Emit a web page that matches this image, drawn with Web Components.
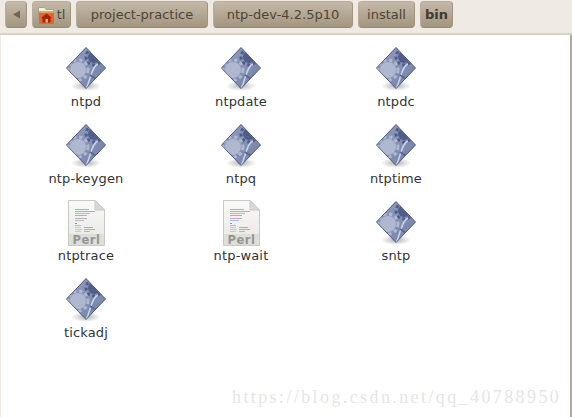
<!DOCTYPE html>
<html>
<head>
<meta charset="utf-8">
<style>
  html, body { margin: 0; padding: 0; width: 572px; height: 417px; overflow: hidden; background: #fff; }
</style>
</head>
<body>
<file-browser>
  <path-bar slot="bar">
    <crumb-button kind="back"></crumb-button>
    <crumb-button kind="home" width="39">tl</crumb-button>
    <crumb-button width="132">project-practice</crumb-button>
    <crumb-button width="140">ntp-dev-4.2.5p10</crumb-button>
    <crumb-button width="57">install</crumb-button>
    <crumb-button width="33" current>bin</crumb-button>
  </path-bar>
  <file-icon>ntpd</file-icon>
  <file-icon>ntpdate</file-icon>
  <file-icon>ntpdc</file-icon>
  <file-icon>ntp-keygen</file-icon>
  <file-icon>ntpq</file-icon>
  <file-icon>ntptime</file-icon>
  <file-icon type="perl">ntptrace</file-icon>
  <file-icon type="perl">ntp-wait</file-icon>
  <file-icon>sntp</file-icon>
  <file-icon>tickadj</file-icon>
  <water-mark slot="mark">https://blog.csdn.net/qq_40788950</water-mark>
</file-browser>

<script>
// Shared look of the window
const colors = {
  chrome: "#efebe4",
  chromeLine: "#d9d2c4",
  buttonTop: "#c4b9a8",
  buttonBottom: "#a3967f",
  buttonLine: "#94886f",
  text: "#4c4536",
};

class FileBrowser extends HTMLElement {
  constructor() {
    super();
    this.attachShadow({ mode: "open" });
    this.shadowRoot.innerHTML = /*html*/ `
    <style>
      :host { display: flex; flex-direction: column; position: relative; width: 572px; height: 417px; background: #fff; overflow: hidden;
        font-family: "DejaVu Sans", sans-serif; }
      .top { background: ${colors.chrome}; height: 33px; border-bottom: 2px solid ${colors.chromeLine}; flex: none; }
      .view { flex: 1; display: grid; grid-template-columns: repeat(3, 155px); grid-auto-rows: 77px; padding: 11px 0 0 7.5px;
        align-content: start; border-right: 2px solid #b3a995; border-left: 1px solid ${colors.chrome}; }
    </style>
    <div class="top"><slot name="bar"></slot></div>
    <div class="view"><slot></slot></div>
    <slot name="mark"></slot>`;
  }
}

class PathBar extends HTMLElement {
  constructor() {
    super();
    this.attachShadow({ mode: "open" });
    this.shadowRoot.innerHTML = `
    <style>
      :host { display: flex; gap: 5px; padding: 1px 0 0 5px; height: 27px; }
    </style>
    <slot></slot>`;
  }
}

class CrumbButton extends HTMLElement {
  constructor() {
    super();
    const kind = this.getAttribute("kind");
    const w = this.getAttribute("width") || 22;
    let lead = "";
    if (kind === "back") {
      lead = `<svg width="9" height="9" viewBox="0 0 9 9"><path d="M8 0.5V8.5L1 4.5Z" fill="#6d6655"/></svg>`;
    }
    if (kind === "home") {
      // folder with the red house on it
      lead = `<svg width="16" height="18" viewBox="0 0 16 18" style="margin-right:3px">
        <path d="M.5 1.500h6l1.500 2h7.500v12H.5Z" fill="#f3efe6" stroke="#a89f8e"/>
        <rect x="1" y="5" width="15" height="13" fill="#e2662b"/>
        <rect x="1" y="5" width="15" height="2" fill="#ef9a62"/>
        <path d="M3 12L8.500 7.500 14 12H12.500v4.500H4.500V12Z" fill="#a8200f"/>
        <rect x="7.500" y="13" width="2.500" height="3.500" fill="#f2b26d"/>
      </svg>`;
    }
    this.attachShadow({ mode: "open" });
    this.shadowRoot.innerHTML = `
    <style>
      :host { display: flex; align-items: center; justify-content: center; box-sizing: border-box; width: ${w}px; height: 27px;
        border: 1px solid ${colors.buttonLine}; border-color: #b7ad9a #a0947e ${colors.buttonLine} #b7ad9a; border-radius: 4px;
        background: linear-gradient(${colors.buttonTop}, ${colors.buttonBottom});
        color: ${colors.text}; font-size: 13px; white-space: nowrap; }
      :host([current]) { font-weight: bold; color: #3f3a2e; }
    </style>
    ${lead}<slot></slot>`;
  }
}

class FileIcon extends HTMLElement {
  constructor() {
    super();
    this.attachShadow({ mode: "open" });
    this.shadowRoot.innerHTML = `
    <style>
      :host { display: flex; flex-direction: column; align-items: center; color: #333; font-size: 13px; }
      .pic { height: 46px; display: flex; align-items: flex-end; justify-content: center; }
      .name { margin-top: 2px; line-height: 16px; white-space: nowrap; letter-spacing: 0.15px; }
      svg { display: block; }
    </style>
    <div class="pic">${this.getAttribute("type") === "perl" ? FileIcon.perl() : FileIcon.binary()}</div>
    <div class="name"><slot></slot></div>`;
  }

  // diamond with the two gears; ids stay inside this shadow root
  static binary() {
    return `<svg width="42" height="46" viewBox="0 0 42 46">
      <defs>
        <linearGradient id="base" x1="0" y1="0" x2="1" y2="1">
          <stop offset="0" stop-color="#8f9bbd"/><stop offset="0.5" stop-color="#8491b5"/><stop offset="1" stop-color="#6f7eaa"/>
        </linearGradient>
        <radialGradient id="shade"><stop offset="0" stop-color="#000" stop-opacity=".3"/><stop offset="1" stop-color="#000" stop-opacity="0"/></radialGradient>
        <clipPath id="inside"><path d="M21 2L40 22 21 42 2 22Z"/></clipPath>
      </defs>
      <ellipse cx="21" cy="40" rx="15" ry="5" fill="url(#shade)"/>
      <path d="M21 1.500L40.500 22 21 42.500 1.500 22Z" fill="url(#base)" stroke="#4c5880" stroke-width="1" stroke-linejoin="round"/>
      <g clip-path="url(#inside)">
        <circle cx="29" cy="11" r="6" fill="#4f5d88"/>
        <circle cx="29" cy="11" r="8" fill="none" stroke="#4f5d88" stroke-width="3" stroke-dasharray="3 2.600"/>
        <circle cx="13" cy="24" r="8" fill="#b0b8cf"/>
        <circle cx="13" cy="24" r="10" fill="none" stroke="#b0b8cf" stroke-width="3" stroke-dasharray="3.200 2.800"/>
        <path d="M33 18C27 20 26 32 21 43" fill="none" stroke="#cdd3e4" stroke-width="1.500"/>
        <path d="M25 29L31 33" fill="none" stroke="#5a6894" stroke-width="2"/>
      </g>
    </svg>`;
  }

  static perl() {
    const lines = [
      [7, 9, 14, "#9db0d8"], [7, 11, 20, "#9db0d8"], [7, 13, 15, "#a8b8dc"], [7, 15, 12, "#9db0d8"],
      [7, 18, 12, "#d6a0c6"], [7, 20, 9, "#b8b8e0"], [7, 23, 2, "#909090"], [7, 25, 6, "#a0cca0"],
      [7, 27, 6, "#b4d8a8"], [16, 27, 9, "#9db0d8"], [7, 29, 7, "#b4d8a8"], [16, 29, 11, "#9db0d8"], [7, 31, 6, "#b4d8a8"], [16, 31, 6, "#a8b8dc"],
    ].map(([x, y, w, c]) => `<rect x="${x}" y="${y}" width="${w}" height="1" fill="${c}"/>`).join("");
    return `<svg width="37" height="46" viewBox="0 0 37 46">
      <defs><linearGradient id="page" x1="0" y1="0" x2="0" y2="1"><stop offset="0" stop-color="#fafafa"/><stop offset="1" stop-color="#e6e6e3"/></linearGradient></defs>
      <path d="M.5.5H27L36.500 10V45.500H.5Z" fill="url(#page)" stroke="#c8c8c4"/>
      <path d="M27 .5V10H36.500Z" fill="#d8d8d4" stroke="#c8c8c4" stroke-linejoin="round"/>
      <rect x="1" y="34" width="35" height="11" fill="#dededa"/>
      ${lines}
      <text x="18.500" y="44" text-anchor="middle" font-family="'DejaVu Sans', sans-serif" font-weight="bold" font-size="11.500" letter-spacing="0.5" fill="#969692">Perl</text>
    </svg>`;
  }
}

class WaterMark extends HTMLElement {
  constructor() {
    super();
    this.attachShadow({ mode: "open" });
    this.shadowRoot.innerHTML = `
    <style>
      :host { position: absolute; left: 232px; top: 386px; color: #e6e6e4; white-space: nowrap;
        font-family: "Liberation Serif", serif; font-size: 18px; line-height: 22px; letter-spacing: 2.4px; }
    </style>
    <slot></slot>`;
  }
}

customElements.define("file-browser", FileBrowser);
customElements.define("path-bar", PathBar);
customElements.define("crumb-button", CrumbButton);
customElements.define("file-icon", FileIcon);
customElements.define("water-mark", WaterMark);
</script>
</body>
</html>
